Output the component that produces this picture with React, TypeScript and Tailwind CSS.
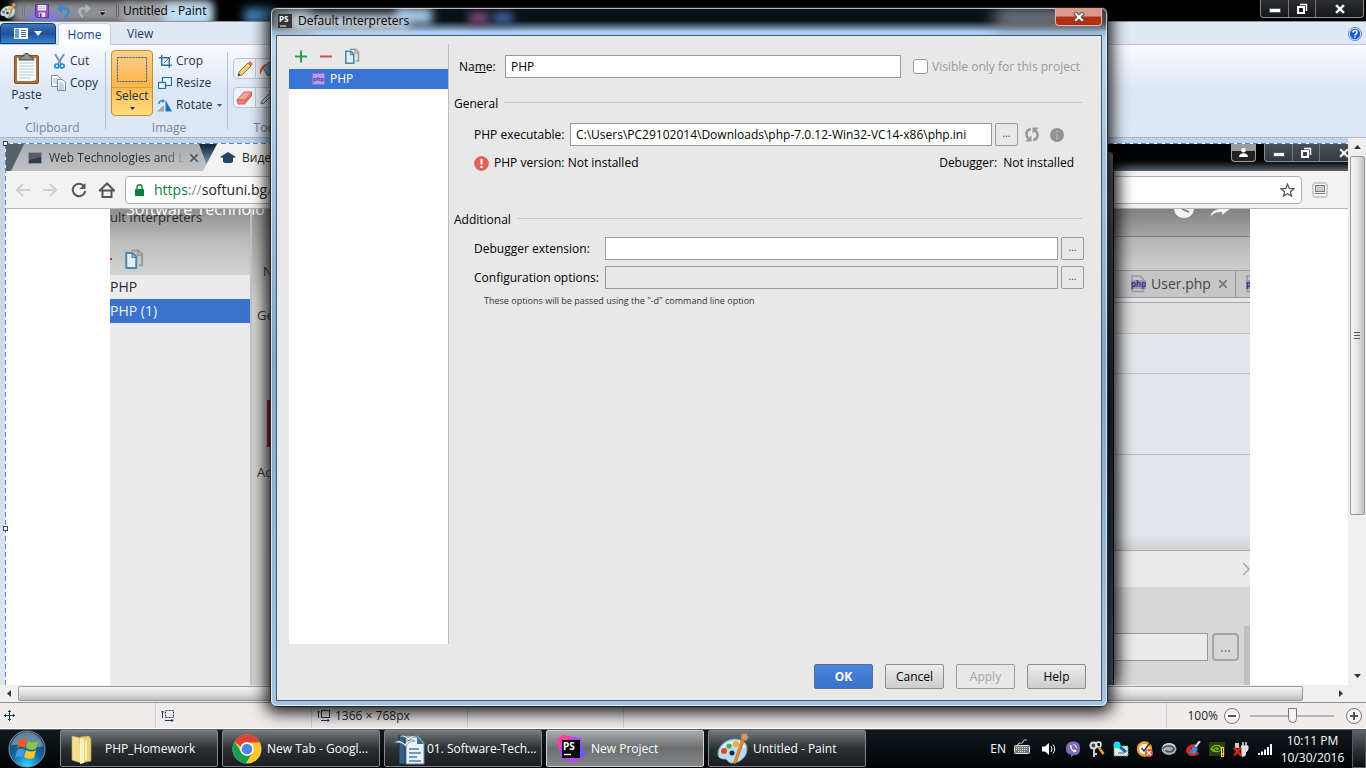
import type { ReactNode } from "react"

/* ---------- small icons ---------- */

function Caret({ className = "" }: { className?: string }) {
  return (
    <svg width="5" height="3" viewBox="0 0 5 3" className={className}>
      <path d="M0 0h5L2.500 3z" fill="currentColor" />
    </svg>
  )
}

function PaletteIcon({ size }: { size: number }) {
  return (
    <svg width={size} height={size} viewBox="0 0 32 32">
      <path d="M1 21C1 12 10 6 18 6c8 0 12 4 12 10 0 8-7 14-15 14-5 0-4-4-7-4-4 0-7-1-7-5z" fill="#b8dcf0" stroke="#6fa3c4" />
      <path d="M4 19c1-6 8-10 14-10 5 0 9 2 9 6" fill="none" stroke="#eaf7ff" strokeWidth="2" />
      <circle cx="7" cy="18" r="3" fill="#e2452f" />
      <circle cx="12" cy="13" r="2.600" fill="#4fae3a" />
      <circle cx="19" cy="11" r="3" fill="#f3ae2b" />
      <circle cx="15" cy="20" r="2.500" fill="#1b2a38" />
      <path d="M28 6l-9 24-2 1 0-2L25 5z" fill="#ef8a25" stroke="#b55f12" strokeWidth=".6" />
      <path d="M24 1l5-1 3 4-3 4-5-2z" fill="#c99a6b" stroke="#8a623c" strokeWidth=".6" />
    </svg>
  )
}

function CopyPagesIcon({ size, blur }: { size: number; blur?: boolean }) {
  return (
    <svg width={size} height={size} viewBox="0 0 16 16" className={blur ? "blur-[.5px]" : ""} fill="none">
      <path d="M6 1.200h5.500l3 3V13H12" stroke="#9a9a9a" strokeWidth="1.600" />
      <path d="M11 1v4h4" stroke="#9a9a9a" strokeWidth="1.200" />
      <path d="M1.800 3.200h5l3 3v9h-8z" fill="#e4edf2" stroke="#4a8ab0" strokeWidth="1.600" />
      <path d="M6.500 3.200v3.400h3.300" stroke="#4a8ab0" strokeWidth="1.200" />
    </svg>
  )
}

function PhpBadge() {
  return (
    <svg width="13" height="12" viewBox="0 0 13 12" className="shrink-0">
      <rect x=".5" y=".5" width="12" height="11" fill="#b79df5" stroke="#8b78cc" />
      <text x="1" y="8" fontSize="6" fontFamily="Open Sans, sans-serif" fontWeight="600" fill="#3c2a6e">php</text>
    </svg>
  )
}

function PhpFile() {
  return (
    <svg width="15" height="18" viewBox="0 0 15 18" className="shrink-0">
      <path d="M1 5V1h8l4 4M1 14v2.500h11.500V14" fill="none" stroke="#999" strokeWidth="1.600" />
      <rect x="0" y="5" width="15" height="9" fill="#9c93cf" />
      <text x="0" y="12" fontSize="8" fontFamily="Open Sans, sans-serif" fontWeight="700" fill="#3d3566">php</text>
    </svg>
  )
}

function WinMin() {
  return (
    <svg width="12" height="5" viewBox="0 0 12 5">
      <rect x=".5" y=".5" width="11" height="4" rx=".5" fill="#fff" stroke="#555a66" />
    </svg>
  )
}

function WinMax() {
  return (
    <svg width="12" height="12" viewBox="0 0 12 12" fill="none">
      <path d="M4 1.500h6.500V8" stroke="#fff" strokeWidth="1.400" />
      <rect x="2" y="4" width="6" height="6" stroke="#fff" strokeWidth="2" />
    </svg>
  )
}

function WinClose() {
  return (
    <svg width="12" height="10" viewBox="0 0 12 10">
      <path d="M3 2l6 6M9 2L3 8" stroke="#3f434d" strokeWidth="4" strokeLinecap="square" />
      <path d="M3 2l6 6M9 2L3 8" stroke="#fff" strokeWidth="2.200" strokeLinecap="square" />
    </svg>
  )
}

/* ---------- Paint window ---------- */

function WindowButtons({ className = "" }: { className?: string }) {
  return (
    <div className={`flex h-[18px] divide-x divide-[#777] overflow-hidden rounded-b border border-t-0 border-[#8a8d92] bg-gradient-to-b from-[#4a4c50]/60 to-[#24272b]/60 ${className}`}>
      <button aria-label="Minimize" className="flex w-7 items-center justify-center pt-1"><WinMin /></button>
      <button aria-label="Restore" className="flex w-[27px] items-center justify-center"><WinMax /></button>
      <button aria-label="Close" className="flex w-[47px] items-center justify-center"><WinClose /></button>
    </div>
  )
}

function PaintTitleBar() {
  return (
    <header className="relative flex h-[22px] shrink-0 items-start overflow-hidden border-b border-[#8c9098] bg-black">
      <div className="absolute top-0 left-3 h-6 w-[200px] bg-[#8e8f93] blur-[4px]" />
      <div className="absolute top-3 left-7 h-3 w-8 bg-[#7a7ae8] blur-[4px]" />
      <div className="absolute top-1 left-[122px] h-5 w-[80px] bg-[#a5a7aa] blur-[4px]" />
      <div className="absolute top-1 left-[164px] h-5 w-12 bg-[#bfe0fa] blur-[4px]" />
      <div className="absolute top-2 left-[244px] h-4 w-8 bg-[#3f7fb5] blur-[5px]" />
      <div className="relative flex h-[21px] flex-1 items-center">
        <PaletteIcon size={16} />
        <span className="ml-1.5 h-3 w-[3px] border-x border-[#777]" />
        <svg width="14" height="14" viewBox="0 0 15 15" className="ml-2.5">
          <path d="M.5.500h14v14H2.500l-2-2z" fill="#8a55b4" stroke="#5d2f88" />
          <rect x="3" y="1" width="9" height="6" fill="#f4effa" />
          <path d="M4 3h7M4 5h7" stroke="#c3b4d4" />
          <rect x="4" y="9" width="7" height="5" fill="#e8e0f0" />
          <rect x="5" y="10" width="2" height="4" fill="#5d2f88" />
        </svg>
        <svg width="13" height="14" viewBox="0 0 13 14" className="ml-2" fill="none">
          <path d="M4 4.500H8c5 0 4.500 5 0 8.500" stroke="#2f8fd0" strokeWidth="2.600" />
          <path d="M5.500 0v9.500L0 4.500z" fill="#2f8fd0" />
        </svg>
        <svg width="13" height="14" viewBox="0 0 13 14" className="ml-2" fill="none">
          <path d="M9 4.500H5C0 4.500.5 9.500 5 13" stroke="#a9b4c2" strokeWidth="2.600" />
          <path d="M7.500 0v9.500L13 4.500z" fill="#a9b4c2" />
        </svg>
        <svg width="7" height="6" viewBox="0 0 7 6" className="mt-1 ml-2"><path d="M0 0h7v1H0zM0 2h7L3.500 6z" fill="#111" stroke="#fff" strokeWidth=".4" /></svg>
        <span className="ml-2.5 h-3 w-[3px] border-x border-[#666]" />
        <span className="ml-1 text-xs leading-4 text-black">Untitled - Paint</span>
      </div>
      <WindowButtons className="relative mr-0.5" />
    </header>
  )
}

function RibbonTabs() {
  return (
    <nav className="flex h-[23px] shrink-0 items-stretch border-b border-[#b8c9de] bg-[#dfe8f4] pt-px text-xs text-[#1e395b]">
      <button aria-label="File menu" className="flex w-14 items-center justify-center gap-1.5 rounded-t-sm border border-[#123a7c] bg-gradient-to-b from-[#3f76bd] via-[#1f4f9c] to-[#3d86cf] text-white">
        <svg width="14" height="11" viewBox="0 0 14 11"><rect width="14" height="11" fill="#fff" /><path d="M1 1h4v9H1z" fill="#6f9cd2" /><path d="M7 2.500h5M7 4.500h5M7 6.500h5M7 8.500h5" stroke="#3a6cb0" /></svg>
        <svg width="8" height="5" viewBox="0 0 8 5"><path d="M0 0h8L4 5z" fill="#fff" /></svg>
      </button>
      <a href="#home" className="-mb-px ml-0.5 flex w-[53px] items-center justify-center rounded-t border border-b-0 border-[#c0d0e4] bg-[#fafcff] text-[#15428b]">Home</a>
      <a href="#view" className="ml-4 flex items-center">View</a>
      <button aria-label="Help" className="mr-1 ml-auto self-center">
        <svg width="14" height="14" viewBox="0 0 14 14">
          <circle cx="7" cy="7" r="6.500" fill="#e8f0ff" stroke="#5b82c4" />
          <circle cx="7" cy="7" r="5.200" fill="#1e5ad8" />
          <path d="M5 5.500c0-3 4.200-2.600 4 0C8.800 7 7 6.800 7 8.500M7 9.500v1.300" stroke="#fff" strokeWidth="1.500" fill="none" />
        </svg>
      </button>
    </nav>
  )
}

function RibbonGroup({ label, className = "", children }: { label: string; className?: string; children: ReactNode }) {
  return (
    <div className={`relative flex shrink-0 flex-col ${className}`}>
      <div className="flex h-[70px] items-start">{children}</div>
      <div className="text-center text-xs leading-4 text-[#74849e]">{label}</div>
    </div>
  )
}

function SmallTool({ icon, label, caret }: { icon: ReactNode; label: string; caret?: boolean }) {
  return (
    <button className="flex h-[22px] items-center text-xs whitespace-nowrap text-[#1e2f4d]">
      <span className="mr-[3px] flex w-4 justify-center">{icon}</span>
      {label}
      {caret && <Caret className="ml-1 text-[#44546e]" />}
    </button>
  )
}

function Ribbon() {
  return (
    <div className="flex h-[93px] shrink-0 overflow-hidden border-b border-[#a9b9d0] bg-gradient-to-b from-[#f8fbff] via-[#dce6f4] to-[#dce8f6] pt-[5px]">
      <RibbonGroup label="Clipboard" className="w-[105px]">
        <button className="flex w-[53px] flex-col items-center pt-[3px] text-xs text-[#1e2f4d]">
          <svg width="25" height="31" viewBox="0 0 25 31">
            <rect x=".5" y="2.500" width="24" height="28" rx="1.500" fill="#a9713b" stroke="#7e4f23" />
            <path d="M3 5h19v22l-3 1H3z" fill="#fbfdfd" />
            <path d="M5 10h15M5 13h15M5 16h15M5 19h15M5 22h15M5 25h12" stroke="#b7c6cc" />
            <path d="M5 7c0-4 5-2 5-5.500L11 .5h3l1 1C15 5 20 3 20 7z" fill="#8c9291" stroke="#404645" />
          </svg>
          <span className="mt-[3px] leading-4">Paste</span>
          <Caret className="mt-1 text-[#44546e]" />
        </button>
        <div className="-ml-0.5 flex flex-col">
          <SmallTool label="Cut" icon={
            <svg width="11" height="15" viewBox="0 0 11 15" fill="none">
              <path d="M1 0l6 10M10 0L4 10" stroke="#8290a3" strokeWidth="2" />
              <circle cx="2.800" cy="12" r="2" stroke="#1c87d2" strokeWidth="1.700" />
              <circle cx="8.200" cy="12" r="2" stroke="#1c87d2" strokeWidth="1.700" />
            </svg>
          } />
          <SmallTool label="Copy" icon={
            <svg width="16" height="16" viewBox="0 0 16 16" fill="#fff" stroke="#7c8796">
              <path d="M.5.500h6l3 3v8h-9z" />
              <path d="M2 4h4M2 6h4M2 8h4" stroke="#9db7d6" />
              <path d="M6.500 4.500h5l3 3v8h-8z" />
              <path d="M8 8h4M8 10h5M8 12h5M8 14h5" stroke="#7fa6d8" />
            </svg>
          } />
        </div>
      </RibbonGroup>
      <div className="mt-0.5 h-[77px] w-px bg-[#b4c3d8]" />
      <RibbonGroup label="Image" className="w-[121px] pl-[5px]">
        <button className="flex h-[66px] w-[42px] flex-col items-center rounded-sm border border-[#c3912a] bg-gradient-to-b from-[#fbd08b] via-[#fdb64a] to-[#ffdc7c] text-xs text-[#1e2f4d]">
          <svg width="30" height="25" viewBox="0 0 30 25" className="mt-1.5">
            <rect x=".5" y=".5" width="29" height="24" fill="none" stroke="#2a6294" strokeDasharray="2 1" />
          </svg>
          <span className="mt-[5px] w-full border-t border-[#dd9c37] leading-4">Select</span>
          <Caret className="mt-[3px]" />
        </button>
        <div className="ml-1 flex flex-col">
          <SmallTool label="Crop" icon={
            <svg width="13" height="13" viewBox="0 0 13 13" fill="none" stroke="#2a6f9f">
              <path d="M2.700 0v10.300h10M0 2.700h10.300v10" strokeWidth="1.400" /><path d="M5 8l7-7" />
            </svg>
          } />
          <SmallTool label="Resize" icon={
            <svg width="14" height="12" viewBox="0 0 14 12" stroke="#2a6f9f" fill="#eef6fc">
              <rect x="4.500" y=".5" width="9" height="8" strokeWidth="1.200" /><rect x=".5" y="5.500" width="7" height="6" strokeWidth="1.200" />
            </svg>
          } />
          <SmallTool label="Rotate" caret icon={
            <svg width="16" height="13" viewBox="0 0 16 13">
              <path d="M0 12.500L7 6v6.500z" fill="#9aa5b1" /><path d="M8.500 1v11.500H15z" fill="#1a75b8" />
              <path d="M2 5c0-3 2-3.500 4-3" stroke="#2d85cc" strokeWidth="1.500" fill="none" /><path d="M5 0l3 2-3 2z" fill="#2d85cc" />
            </svg>
          } />
        </div>
      </RibbonGroup>
      <div className="mt-0.5 h-[77px] w-px bg-[#b4c3d8]" />
      <RibbonGroup label="Tools" className="w-[76px] pl-[5px]">
        <div className="mt-2 flex w-full flex-col gap-2">
          <div className="flex h-[21px] divide-x divide-[#c2cddd] rounded-sm border border-[#b9c6d9] bg-[#eef3fa]">
            <button aria-label="Pencil" className="flex w-[22px] items-center justify-center">
              <svg width="16" height="16" viewBox="0 0 16 16"><path d="M1 15l1-4L11 2l3 3-9 9z" fill="#f2d370" stroke="#8b713a" /><path d="M11 2l2-2 3 3-2 2z" fill="#d9705f" /><path d="M1 15l.8-2.500L3.500 14z" fill="#222" /></svg>
            </button>
            <button aria-label="Fill with color" className="flex w-[22px] items-center justify-center">
              <svg width="16" height="16" viewBox="0 0 16 16"><path d="M4 7l6-6 6 7-7 7z" fill="#83b4da" stroke="#3b6d99" /><path d="M1 14C0 8 3 4 7 3L4 8z" fill="#e85b1d" /></svg>
            </button>
          </div>
          <div className="flex h-[21px] divide-x divide-[#c2cddd] rounded-sm border border-[#b9c6d9] bg-[#eef3fa]">
            <button aria-label="Eraser" className="flex w-[22px] items-center justify-center">
              <svg width="17" height="14" viewBox="0 0 17 14"><path d="M1 9L8 1h8l-7 8z" fill="#f5a597" stroke="#c56b5e" /><path d="M1 9h8v4H2z" fill="#e88475" stroke="#c56b5e" /><path d="M9 9l7-8v4l-7 8z" fill="#d9705f" /></svg>
            </button>
            <button aria-label="Color picker" className="flex w-[22px] items-center justify-center">
              <svg width="15" height="15" viewBox="0 0 15 15"><path d="M1 14l1-3 7-7 2 2-7 7z" fill="#dbe6ef" stroke="#596b7c" /><path d="M9 2l2-2 4 4-2 2z" fill="#34495e" /></svg>
            </button>
          </div>
        </div>
      </RibbonGroup>
    </div>
  )
}

/* ---------- pasted browser shot on the canvas ---------- */

function BrowserTabs() {
  return (
    <div className="relative flex h-[27px] shrink-0 overflow-hidden bg-gradient-to-b from-[#020304] from-60% to-[#5b6470]">
      <div className="absolute inset-y-0 left-0 w-8 bg-[#56616b]" />
      <div className="absolute inset-y-0 left-[180px] w-10 bg-gradient-to-b from-[#10243a] to-[#a5c2dc]" />
      <div className="relative flex w-[203px] items-center bg-gradient-to-b from-[#a9adb1] to-[#bfc2c5] pl-[22px] [clip-path:polygon(18px_0,193px_0,203px_100%,5px_100%)]">
        <svg width="14" height="12" viewBox="0 0 14 12"><rect width="14" height="12" fill="#8d929a" /><rect x="1" y="1" width="12" height="10" fill="#343a45" /><path d="M1 1h12v4L1 8z" fill="#555d6a" /></svg>
        <span className="ml-[7px] w-[137px] bg-gradient-to-r from-[#2b2d30] from-85% to-transparent bg-clip-text text-xs leading-4 whitespace-nowrap text-transparent">Web Technologies and L</span>
        <svg width="8" height="8" viewBox="0 0 8 8" className="ml-1"><path d="M0 0l8 8M8 0L0 8" stroke="#555" strokeWidth="1.600" /></svg>
      </div>
      <div className="relative -ml-1.5 flex w-[200px] items-center bg-[#f2f2f2] pl-[17px] text-xs text-[#222] [clip-path:polygon(14px_0,186px_0,200px_100%,0_100%)]">
        <svg width="16" height="11" viewBox="0 0 16 11"><path d="M8 0l8 5-3 1v4c-3 2-7 2-10 0V6L0 5z" fill="#234465" /></svg>
        <span className="ml-1.5">Видео</span>
      </div>
      <button aria-label="Profile" className="relative mr-2 ml-auto flex h-[18px] w-[25px] items-center justify-center rounded-b border border-t-0 border-[#9a9da1] bg-gradient-to-b from-[#9c9c9c] from-40% to-[#222] to-40%">
        <svg width="9" height="9" viewBox="0 0 9 9" fill="#fff"><circle cx="4.500" cy="2.300" r="2.300" /><path d="M0 9c0-5 9-5 9 0z" /></svg>
      </button>
      <WindowButtons className="relative -mr-5 bg-[#4b5563]" />
    </div>
  )
}

function BrowserToolbar() {
  return (
    <div className="flex h-[38px] shrink-0 items-center border-b border-[#b5b5b5] bg-[#f2f2f2] pl-[9px]">
      <div className="flex items-center gap-3">
        <svg width="16" height="14" viewBox="0 0 16 14" fill="none" stroke="#cfcfcf" strokeWidth="2"><path d="M15 7H2M8 1L2 7l6 6" /></svg>
        <svg width="16" height="14" viewBox="0 0 16 14" fill="none" stroke="#cfcfcf" strokeWidth="2"><path d="M0 7h13M7 1l6 6-6 6" /></svg>
        <svg width="16" height="16" viewBox="0 0 16 16" fill="none" stroke="#555" strokeWidth="2"><path d="M13 4a6.300 6.300 0 1 0 1.300 5" /><path d="M14.500 1v6h-6z" fill="#555" stroke="none" /></svg>
        <svg width="16" height="16" viewBox="0 0 16 16" fill="none" stroke="#555" strokeWidth="2"><path d="M3.500 8v7h9V8M.8 8.500L8 1.500l7.200 7z" /></svg>
      </div>
      <div className="ml-2.5 flex h-7 flex-1 items-center rounded-sm border border-[#b0b0b0] bg-white pr-1.5 pl-[9px]">
        <svg width="9" height="12" viewBox="0 0 9 12"><rect y="5" width="9" height="7" rx=".5" fill="#0b8043" /><path d="M2 5V3c0-3 5-3 5 0v2" fill="none" stroke="#0b8043" strokeWidth="1.400" /></svg>
        <span className="ml-2.5 text-sm text-[#222]"><span className="text-[#0b8043]">https</span><span className="text-[#888]">://</span>softuni.bg<span className="text-[#888]">/t</span></span>
        <svg width="15" height="14" viewBox="0 0 15 14" className="ml-auto"><path d="M7.500 1.200l1.800 4.300 4.600.3-3.500 3 1.100 4.400-4-2.400-4 2.400 1.100-4.400-3.500-3 4.600-.3z" fill="none" stroke="#555" strokeWidth="1.300" /></svg>
      </div>
      <div className="mr-5 ml-2.5 flex size-4 items-center justify-center rounded-sm border-2 border-[#ccc] bg-white">
        <svg width="10" height="9" viewBox="0 0 10 9"><rect x=".5" y=".5" width="9" height="6" fill="#ccc" stroke="#777" /><path d="M0 8.500h10" stroke="#777" /></svg>
      </div>
    </div>
  )
}

function VideoLeft() {
  return (
    <div className="flex w-[140px] shrink-0 flex-col bg-[#ebebeb] text-[13px] text-[#2a2a2a]">
      <div className="flex h-[66px] shrink-0 flex-col justify-between bg-gradient-to-b from-[#8e8e8e] via-[#bdbdbd] to-[#d3d3d3]">
        <span className="leading-4">ult Interpreters</span>
        <span className="mb-1.5 flex items-center"><span className="mr-3 h-0.5 w-0.5 bg-[#c33]" /><CopyPagesIcon size={20} blur /></span>
      </div>
      <div className="flex h-6 items-center text-sm">PHP</div>
      <div className="flex h-6 items-center bg-[#3b72ce] text-sm text-[#e8f0fc]">PHP (1)</div>
    </div>
  )
}

function VideoRight() {
  return (
    <div className="flex w-[142px] shrink-0 flex-col bg-[#e2e5ea] pl-1.5">
      <div className="flex h-[28px] shrink-0 items-start gap-4 border-b border-[#7d7d7d] bg-gradient-to-b from-[#828282] to-[#a6a6a6] pl-[60px]">
        <svg width="20" height="9" viewBox="0 0 20 9"><path d="M0 0h20c-1 12-19 12-20 0z" fill="#f3f3f3" /><path d="M8 0l7 3" stroke="#777" strokeWidth="1.600" /></svg>
        <svg width="20" height="8" viewBox="0 0 20 8"><path d="M0 8C2 2 6 0 11 0h9l-8 6V3C7 3 3 4 0 8z" fill="#f3f3f3" /></svg>
      </div>
      <div className="h-[33px] shrink-0 bg-gradient-to-b from-[#b4b4b4] to-[#cecece]" />
      <div className="flex h-[28px] shrink-0 items-center overflow-hidden border-y border-[#999] bg-[#c6c6c6] pl-[17px] text-sm text-[#444]">
        <PhpFile />
        <span className="ml-[5px]">User.php</span>
        <svg width="8" height="8" viewBox="0 0 8 8" className="mx-2 shrink-0"><path d="M0 0l8 8M8 0L0 8" stroke="#777" strokeWidth="1.800" /></svg>
        <span className="h-full w-px shrink-0 bg-[#999]" />
        <span className="ml-2.5 shrink-0"><PhpFile /></span>
      </div>
      <div className="mt-1 h-[32px] shrink-0 border-y border-[#c0c0c0] border-t-[#aaa] bg-[#dedede]" />
      <div className="h-[40px] shrink-0 border-b border-[#c2c4c8]" />
      <div className="h-[81px] shrink-0 border-b border-[#b9bbbf]" />
      <div className="h-[96px] shrink-0 border-b border-[#aaa] bg-gradient-to-b from-[#e2e5ea] from-85% to-[#cfd1d5]" />
      <div className="flex h-[36px] shrink-0 items-center justify-end bg-[#ebebeb]">
        <svg width="7" height="14" viewBox="0 0 7 14"><path d="M0 1l6 6-6 6" fill="none" stroke="#aaa" strokeWidth="1.500" /></svg>
      </div>
      <div className="flex flex-1 items-start bg-[#d7d7d7]">
        <div className="mt-[46px] h-7 flex-1 border border-l-0 border-[#999] bg-[#ebebeb]" />
        <div className="mt-[46px] mr-[5px] ml-1 flex h-7 w-[27px] items-center justify-center rounded-sm border-2 border-[#a5a5a5] text-sm text-[#777]">...</div>
        <div className="mt-[39px] w-1.5 self-stretch bg-[#c0c0c0]" />
      </div>
    </div>
  )
}

function BrowserShot() {
  return (
    <div className="relative flex min-w-0 flex-1 flex-col overflow-hidden bg-white">
      <BrowserTabs />
      <BrowserToolbar />
      <div className="relative mr-[98px] ml-[104px] flex min-h-0 flex-1 overflow-hidden">
        <VideoLeft />
        <div className="flex flex-1 flex-col border-l-2 border-[#c4c4c4] bg-gradient-to-b from-[#999] to-[#d5d5d5] to-20% pl-[5px] text-[13px] leading-4 text-[#333]">
          <span className="mt-[54px] ml-1.5">Name:</span>
          <span className="mt-7">General</span>
          <span className="mt-[77px] ml-2.5 h-[47px] w-20 bg-[#9c2f25]" />
          <span className="mt-[17px]">Additional</span>
        </div>
        <VideoRight />
        <div className="absolute -top-2.5 left-4 text-base leading-5 text-white">Software Technolo</div>
      </div>
      {/* edge of the dialog inside the pasted picture */}
      <div className="absolute top-2 right-[234px] bottom-0 w-3 rounded-tr border-r border-black bg-gradient-to-b from-[#6a6f77] via-[#23303f] to-[#55718f] shadow-[2px_0_18px_rgba(0,0,0,1)]" />
    </div>
  )
}

function VerticalScroll() {
  return (
    <div className="flex w-[18px] shrink-0 flex-col items-center bg-[#efefef] text-[#333]">
      <svg width="7" height="4" viewBox="0 0 7 4" className="my-[7px] shrink-0"><path d="M0 4h7L3.500 0z" fill="currentColor" /></svg>
      <div className="flex w-[15px] flex-[358] flex-col items-center justify-center gap-0.5 rounded-xs border border-[#979797] bg-gradient-to-r from-[#f6f6f6] via-[#e3e3e3] to-[#c0c0c6]">
        <span className="h-px w-1.5 bg-[#555]" /><span className="h-px w-1.5 bg-[#555]" /><span className="h-px w-1.5 bg-[#555]" />
      </div>
      <div className="flex-[160]" />
      <svg width="7" height="4" viewBox="0 0 7 4" className="mb-[7px] shrink-0"><path d="M0 0h7L3.500 4z" fill="currentColor" /></svg>
    </div>
  )
}

function PaintCanvas() {
  return (
    <main className="flex min-h-0 flex-1">
      <div className="relative flex min-w-0 flex-1 flex-col bg-gradient-to-b from-[#c5d0e2] to-[#dde7f4] pt-[5px] pl-[5px]">
        <div className="h-px shrink-0 bg-[repeating-linear-gradient(90deg,#3c90f0_0_5px,#fff_5px_8px)]" />
        <div className="flex min-h-0 flex-1">
          <div className="w-px bg-[repeating-linear-gradient(180deg,#3c90f0_0_5px,#fff_5px_8px)]" />
          <BrowserShot />
        </div>
        <span className="absolute top-[3px] left-[3px] size-[5px] border border-[#444] bg-white" />
        <span className="absolute top-[388px] left-[3px] size-[5px] border border-[#444] bg-white" />
      </div>
      <VerticalScroll />
    </main>
  )
}

function HorizontalScroll() {
  return (
    <div className="flex h-[17px] shrink-0 items-center bg-[#efefef] pr-[23px] text-[#333]">
      <svg width="4" height="7" viewBox="0 0 4 7" className="mx-[7px]"><path d="M4 0v7L0 3.500z" fill="currentColor" /></svg>
      <div className="h-[15px] flex-1 rounded-xs border border-[#979797] bg-gradient-to-b from-[#f6f6f6] via-[#dedede] to-[#bdbdbf]" />
      <svg width="4" height="7" viewBox="0 0 4 7" className="ml-9"><path d="M0 0v7l4-3.500z" fill="currentColor" /></svg>
    </div>
  )
}

function StatusBar() {
  return (
    <footer className="flex h-[27px] shrink-0 items-stretch border-t border-b border-t-[#8f8f8f] border-b-white bg-[#f0ecec] text-xs text-[#222]">
      <div className="flex w-[156px] items-center border-r border-[#d2d0d0] pl-1">
        <svg width="11" height="11" viewBox="0 0 11 11" stroke="#1e395b" fill="none"><path d="M5.500 0v11M0 5.500h11M4 2l1.500-1.500L7 2M4 9l1.500 1.500L7 9M2 4L.5 5.500 2 7M9 4l1.500 1.500L9 7" /></svg>
      </div>
      <div className="flex w-[156px] items-center border-r border-[#d2d0d0] pl-[5px]">
        <svg width="13" height="12" viewBox="0 0 13 12" stroke="#1e395b" fill="none"><rect x="4.500" y=".5" width="8" height="7" strokeDasharray="2 1" /><path d="M1.500 1v7M0 2.500L1.500 1 3 2.500M4 10.500h8M10.500 9l1.500 1.500-1.500 1.500" /></svg>
      </div>
      <div className="flex w-[156px] items-center border-r border-[#d2d0d0] pl-[5px]">
        <svg width="13" height="12" viewBox="0 0 13 12" stroke="#1e395b" fill="none"><rect x="4.500" y=".5" width="8" height="7" /><path d="M1.500 1v7M0 2.500L1.500 1 3 2.500M4 10.500h8M10.500 9l1.500 1.500-1.500 1.500" /></svg>
        <span className="ml-[5px]">1366 × 768px</span>
      </div>
      <div className="w-[156px] border-r border-[#d2d0d0]" />
      <div className="ml-auto flex items-center border-l border-[#d2d0d0] pr-1 pl-5">
        <label htmlFor="zoom">100%</label>
        <button aria-label="Zoom out" className="ml-1.5"><svg width="16" height="16" viewBox="0 0 16 16"><circle cx="8" cy="8" r="7.500" fill="#f4f4f4" stroke="#777" /><path d="M4 8h8" stroke="#555" strokeWidth="2" /></svg></button>
        <input
          id="zoom" type="range" defaultValue={50}
          className="mr-3 ml-2.5 h-4 w-[84px] appearance-none bg-[linear-gradient(#b5b5b5,#b5b5b5)] bg-[length:100%_2px] bg-center bg-no-repeat [&::-webkit-slider-thumb]:h-[15px] [&::-webkit-slider-thumb]:w-[9px] [&::-webkit-slider-thumb]:appearance-none [&::-webkit-slider-thumb]:rounded-b-md [&::-webkit-slider-thumb]:border [&::-webkit-slider-thumb]:border-[#777] [&::-webkit-slider-thumb]:bg-[#f3f3f3]"
        />
        <button aria-label="Zoom in"><svg width="16" height="16" viewBox="0 0 16 16"><circle cx="8" cy="8" r="7.500" fill="#f4f4f4" stroke="#777" /><path d="M4 8h8M8 4v8" stroke="#555" strokeWidth="2" /></svg></button>
      </div>
    </footer>
  )
}

/* ---------- interpreters dialog ---------- */

function BrowseButton({ label }: { label: string }) {
  return (
    <button aria-label={label} className="flex size-[23px] shrink-0 items-center justify-center rounded-xs border border-[#999] bg-[#e8e8e8] pb-0.5 text-[10px] text-[#444]">...</button>
  )
}

function SectionTitle({ children }: { children: ReactNode }) {
  return (
    <div className="mr-0.5 flex h-4 items-center gap-1.5 leading-4">
      <h2>{children}</h2>
      <span className="mb-1 h-px flex-1 bg-[#c8c8c8]" />
    </div>
  )
}

const inputClass = "h-[23px] min-w-0 flex-1 border border-[#999] px-[5px]"
const buttonClass = "h-[25px] w-[59px] rounded-xs border border-[#8c8c8c] bg-gradient-to-b from-[#ececec] to-[#cdcdcd]"

function InterpreterList() {
  return (
    <aside className="flex w-[160px] shrink-0 flex-col border-r border-[#bdbdbd] pt-[3px]">
      <div className="flex h-[22px] shrink-0 items-start gap-[11px] pt-px pl-[5px]">
        <button aria-label="Add" className="mt-0.5"><svg width="14" height="13" viewBox="0 0 14 13"><path d="M1 6.500h12M7 .500v12" stroke="#2a9e47" strokeWidth="2" /></svg></button>
        <button aria-label="Remove" className="mt-0.5"><svg width="14" height="13" viewBox="0 0 14 13"><path d="M1 6.500h12" stroke="#c9544a" strokeWidth="2" /></svg></button>
        <button aria-label="Copy"><CopyPagesIcon size={16} /></button>
      </div>
      <ul className="flex-1 bg-white">
        <li className="flex h-5 items-center gap-[5px] bg-[#3875d7] pl-[23px] text-white"><PhpBadge />PHP</li>
      </ul>
    </aside>
  )
}

function InterpreterForm() {
  return (
    <section className="flex min-w-0 flex-1 flex-col pr-0.5 pl-[5px]">
      <div className="mt-[11px] flex h-[23px] items-center pl-[5px]">
        <label htmlFor="name" className="w-[46px]">Na<u>m</u>e:</label>
        <input id="name" defaultValue="PHP" className={`${inputClass} bg-white`} />
        <label className="ml-3 flex items-center gap-1 pr-1 text-[#999]">
          <input type="checkbox" disabled className="size-[15px] appearance-none rounded-[3px] border border-[#999] bg-white" />
          Visible only for this project
        </label>
      </div>
      <div className="mt-[18px]"><SectionTitle>General</SectionTitle></div>
      <div className="mt-[11px] flex h-[23px] items-center pl-5">
        <label htmlFor="exe" className="w-24 whitespace-nowrap">PHP executable:</label>
        <input id="exe" defaultValue="C:\Users\PC29102014\Downloads\php-7.0.12-Win32-VC14-x86\php.ini" className={`${inputClass} mr-[3px] bg-white`} />
        <BrowseButton label="Browse executable" />
        <button aria-label="Reload" className="ml-[7px]">
          <svg width="14" height="15" viewBox="0 0 14 15" fill="none" stroke="#999" strokeWidth="2.600">
            <path d="M6 2C1 2.500 0 8 3.500 11.500M8 13c5-.5 6-6 2.500-9.500" />
            <path d="M0 14.500h6.500V8.500zM14 .500H7.500V6.500z" fill="#999" stroke="none" />
          </svg>
        </button>
        <button aria-label="Info" className="mr-5 ml-[11px]">
          <svg width="14" height="14" viewBox="0 0 14 14"><circle cx="7" cy="7" r="7" fill="#939393" /><path d="M7 2.500v2M7 6v5.500" stroke="#adadad" strokeWidth="2" /></svg>
        </button>
      </div>
      <div className="mt-[9px] flex h-4 items-center pr-2.5 pl-5">
        <svg width="15" height="15" viewBox="0 0 15 15"><circle cx="7.500" cy="7.500" r="7" fill="#e0635a" stroke="#c9534b" strokeWidth=".6" /><path d="M7.500 3v5.500M7.500 10v2" stroke="#fff" strokeWidth="2" /></svg>
        <span className="ml-[5px]">PHP version: Not installed</span>
        <span className="ml-auto">Debugger:</span>
        <span className="ml-1.5">Not installed</span>
      </div>
      <div className="mt-[41px]"><SectionTitle>Additional</SectionTitle></div>
      <div className="mt-[9px] flex h-[23px] items-center gap-[3px] pl-5">
        <label htmlFor="ext" className="w-[128px] whitespace-nowrap">Debugger extension:</label>
        <input id="ext" className={`${inputClass} bg-white`} />
        <BrowseButton label="Browse extension" />
      </div>
      <div className="mt-1.5 flex h-[23px] items-center gap-[3px] pl-5">
        <label htmlFor="opts" className="w-[128px] whitespace-nowrap">Configuration options:</label>
        <input id="opts" readOnly className={`${inputClass} bg-[#e8e8e8]`} />
        <BrowseButton label="Edit options" />
      </div>
      <p className="mt-1 pl-[30px] text-[9px] leading-4 text-[#333]">These options will be passed using the "-d" command line option</p>
    </section>
  )
}

function Dialog() {
  return (
    <div role="dialog" aria-labelledby="dialog-title" className="absolute top-[7px] right-[258px] bottom-[61px] left-[270px] flex flex-col overflow-hidden rounded-md border border-[#20262e] bg-gradient-to-b from-[#c2daf2] via-[#84a5c6] to-[#a3c4e4] px-[5px] pb-[5px] shadow-[0_2px_16px_4px_rgba(0,0,0,.9)]">
      <div className="absolute inset-x-0 top-0 h-7 bg-gradient-to-b from-[#0b1118] from-45% to-[#a9ccf2] to-85%" />
      <div className="absolute top-0 left-0 h-6 w-10 bg-[#8d959e] blur-[6px]" />
      <div className="absolute top-1.5 left-5 h-4 w-[118px] bg-[#c6cfd9] blur-[5px]" />
      <div className="absolute top-0 left-[125px] h-4 w-9 bg-[#a9cbea] blur-[5px]" />
      <div className="absolute top-1 left-[198px] h-3 w-5 bg-[#7b4a78] blur-[4px]" />
      <div className="absolute top-1 left-[222px] h-3 w-5 bg-[#3f5f98] blur-[4px]" />
      <div className="absolute top-0 right-0 h-5 w-28 bg-[#777d85] blur-[8px]" />
      <div className="absolute inset-0 rounded-md border border-white/70" />
      <div className="relative flex h-[27px] shrink-0 items-start">
        <svg width="14" height="14" viewBox="0 0 14 14" className="mt-1.5 ml-0.5">
          <rect width="14" height="14" fill="#333" />
          <text x="1" y="8" fontSize="8" fontWeight="700" fontFamily="Open Sans, sans-serif" fill="#fff">PS</text>
          <path d="M2 12h6" stroke="#fff" />
        </svg>
        <h1 id="dialog-title" className="mt-[5px] ml-1.5 leading-4">Default Interpreters</h1>
        <button aria-label="Close dialog" className="ml-auto flex h-[18px] w-[47px] items-center justify-center rounded-b border border-t-0 border-[#eab0a4] bg-gradient-to-b from-[#d99a8d] from-45% to-[#b22f16] to-55%"><WinClose /></button>
      </div>
      <div className="relative flex min-h-0 flex-1 flex-col border border-[#4a5968] bg-[#e8e8e8] pt-2 pr-[15px] pl-3">
        <div className="flex min-h-0 flex-1">
          <InterpreterList />
          <InterpreterForm />
        </div>
        <div className="mt-5 mb-[11px] flex justify-end gap-3 pl-4">
          <button className="h-[25px] w-[59px] rounded-xs border border-[#5a6f94] bg-gradient-to-b from-[#4a84e0] to-[#3b70cb] font-bold text-white">OK</button>
          <button className={buttonClass}>Cancel</button>
          <button disabled className="h-[25px] w-[59px] rounded-xs border border-[#999] text-[#a5a5a5]">Apply</button>
          <button className={buttonClass}>Help</button>
        </div>
      </div>
    </div>
  )
}

/* ---------- taskbar ---------- */

const tasks = [
  {
    title: "PHP_Homework",
    gap: "ml-1",
    icon: (
      <svg width="32" height="32" viewBox="0 0 32 32">
        <path d="M3 3l9 2v25l-9-3z" fill="#f3df91" stroke="#c4a64b" strokeWidth=".7" />
        <path d="M11 4l9-1 2 3v22l-10 2z" fill="#ecd277" stroke="#bb9b3e" strokeWidth=".7" />
        <path d="M11 5l4 1v24l-4 1z" fill="#fbf1be" />
        <path d="M16 8l2-1v20l-2 1z" fill="#fff" opacity=".6" />
      </svg>
    ),
  },
  {
    title: "New Tab - Googl...",
    gap: "ml-1",
    icon: (
      <svg width="30" height="30" viewBox="0 0 32 32">
        <circle cx="16" cy="16" r="15.500" fill="#fbc92f" />
        <path d="M2.600 8.200A15.500 15.500 0 0 1 29.800 9H16a7 7 0 0 0-6.500 4.500z" fill="#dc4437" />
        <path d="M2.600 8.200a15.500 15.500 0 0 0 12 23.200L21.500 20.500a7 7 0 0 1-11.500-1z" fill="#179c58" />
        <circle cx="16" cy="16" r="7.300" fill="#fff" /><circle cx="16" cy="16" r="5.700" fill="#4a86ee" />
      </svg>
    ),
  },
  {
    title: "01. Software-Tech...",
    gap: "ml-0.5",
    icon: (
      <svg width="32" height="32" viewBox="0 0 32 32">
        <rect x="6" y="3" width="6" height="28" fill="#345f86" stroke="#15314c" />
        <path d="M13 3h12l6 7v21H13z" fill="#e9f0f6" stroke="#6b8aa6" /><path d="M24 3v8h7z" fill="#3a6c98" />
        <path d="M16 16h10M16 20h12M16 24h8M16 28h12" stroke="#4e7fa9" strokeWidth="1.600" />
        <path d="M1 10c4-4 8-2 11 1 2-4 6-5 10-3-4 0-8 2-9 6-3-4-7-5-12-4zM6 4c3-3 7-2 9 1 2-2 5-3 9-1-4 0-7 1-8 4-3-4-6-5-10-4z" fill="#fff" stroke="#20435f" strokeWidth=".5" />
      </svg>
    ),
  },
  {
    title: "New Project",
    gap: "ml-1",
    active: true,
    icon: (
      <svg width="30" height="30" viewBox="0 0 30 30">
        <path d="M1 6l6-5 10 2 8 1 0 5 5 12-7 4-5 4-12-4-3-8z" fill="#b04af0" />
        <path d="M1 6l6-5 10 2-10 6-4 7z" fill="#ff3f9a" /><path d="M24 8l6 13-7 4z" fill="#6d5cf6" />
        <rect x="6" y="6" width="18" height="18" fill="#0a0a0a" />
        <text x="7" y="16" fontSize="10" fontWeight="700" fontFamily="Open Sans, sans-serif" fill="#fff">PS</text>
        <path d="M8 20.500h7" stroke="#fff" strokeWidth="1.400" />
      </svg>
    ),
  },
  { title: "Untitled - Paint", gap: "ml-1", icon: <PaletteIcon size={32} /> },
]

function Tray() {
  return (
    <div className="flex items-center gap-2 text-white">
      <span>EN</span>
      <svg width="16" height="16" viewBox="0 0 16 16" className="mr-[3px] mb-1" fill="none" stroke="#ddd"><rect x=".5" y="6.500" width="15" height="8" rx="1" fill="#777" /><path d="M2 8.500h12M2 10.500h12M4 12.500h8" strokeDasharray="1 1" /><path d="M4 6c0-4 4 0 5-3s3-2 4-2" /></svg>
      <svg width="16" height="16" viewBox="0 0 16 16" fill="#fff"><path d="M1 5.500h3L8 2v12l-4-3.500H1z" /><path d="M10 5q2 3 0 6M12 3.500q3.500 4.500 0 9" fill="none" stroke="#fff" /></svg>
      <svg width="16" height="16" viewBox="0 0 16 16"><path d="M8 .500c5 0 7 2 7 7s-2 6.500-6 6.500l-3 2v-2.500C2 13 1 11 1 7.500s2-7 7-7z" fill="#7f6bb8" /><path d="M5 4c-1 1 1 5 4 7 2 1 3-1 2-2l-1.500-.5-1 .7C7 8 6.500 7 6.500 6.500L7 6 6 4z" fill="#fff" /><path d="M8.500 3.500q3 .5 3 3.500" stroke="#fff" fill="none" /></svg>
      <svg width="16" height="16" viewBox="0 0 16 16"><circle cx="4.500" cy="4.500" r="3" fill="#445" stroke="#ddd" strokeWidth="2" /><path d="M4 8h2v8H4zM6 12h2v2H6z" fill="#ccc" /><circle cx="9.500" cy="3.500" r="2.500" fill="none" stroke="#eee" strokeWidth="1.500" /><path d="M9.500 6l5 7" stroke="#e8a02a" strokeWidth="2.600" /></svg>
      <svg width="16" height="16" viewBox="0 0 16 16"><rect x="1" y="5" width="14" height="10" fill="#dfeee4" stroke="#4a9d5d" strokeDasharray="2 1" /><path d="M7 6l6 5" stroke="#245fb0" strokeWidth="3" /><path d="M5 12h6" stroke="#555" /><circle cx="4" cy="4" r="3.500" fill="#12e0f0" /></svg>
      <svg width="16" height="16" viewBox="0 0 16 16"><circle cx="7.500" cy="8" r="6.500" fill="#fff" stroke="#f2a31b" strokeWidth="2.500" /><path d="M4.500 7l2.500 3 6-8" stroke="#333" strokeWidth="1.600" fill="none" /><circle cx="12" cy="12" r="4" fill="#e0512c" /><path d="M10 10l4 4M14 10l-4 4" stroke="#fff" strokeWidth="1.300" /></svg>
      <svg width="16" height="16" viewBox="0 0 16 16"><ellipse cx="8" cy="8" rx="7.500" ry="6" fill="#a7adb2" /><path d="M2 8c1-4 10-4 11 0-1 4-8 3-8 1" fill="none" stroke="#4d565e" strokeWidth="1.700" /><path d="M2 5c3-3 9-3 12 0" stroke="#eef2f4" fill="none" /></svg>
      <svg width="16" height="16" viewBox="0 0 16 16"><path d="M13 5C9 1 1 4 1 9.500S9 17 14 13l-2-3c-2 2-6 2-6-1s3-4 5-1z" fill="#cf2c1d" /><path d="M15 0L10 6" stroke="#d8dfe6" strokeWidth="2" /><path d="M9 4l4 4-3 5-6-1z" fill="#3b8bd4" /></svg>
      <svg width="16" height="16" viewBox="0 0 16 16"><rect width="16" height="14" y="1" fill="#2c3a1c" /><path d="M1 8c3-5 9-6 13-1-3 5-9 6-13 1z" fill="#76b900" /><path d="M4 8c1-3 6-3 7 0-1 2-4 2-5 0" fill="none" stroke="#1d2a10" strokeWidth="1.200" /><path d="M12 6h3v10h-3z" fill="#f5d92b" /><path d="M13.500 7v5M13.500 13.500V15" stroke="#333" /></svg>
      <svg width="16" height="16" viewBox="0 0 16 16"><path d="M8 5h7v3q-1 3-2.500 3v2q0 3-4 2" fill="#ddd" stroke="#eee" /><path d="M10 1v4M13 1v4" stroke="#fff" strokeWidth="1.300" /><path d="M2 2h4v5H2z" fill="#ccc" /><path d="M1 6.500l7 8M8 6.500l-7 8" stroke="#e2231b" strokeWidth="2.500" /></svg>
      <svg width="16" height="16" viewBox="0 0 16 16" fill="#fff"><path d="M1 12h2v2H1zM4 10.500h2V14H4zM7 8.500h2V14H7zM10 6h2v8h-2zM13 3h2v11h-2z" /></svg>
    </div>
  )
}

function Taskbar() {
  return (
    <div className="flex h-[39px] shrink-0 items-stretch border-t border-[#59636c] bg-gradient-to-b from-[#12181d] to-[#020507] text-xs">
      <button aria-label="Start" className="mr-[6px] flex w-[54px] items-center justify-center">
        <svg width="38" height="38" viewBox="0 0 38 38">
          <defs>
            <radialGradient id="orb" cx=".5" cy=".95" r=".9"><stop offset="0" stopColor="#35d6ff" /><stop offset=".45" stopColor="#136aa8" /><stop offset="1" stopColor="#173a5c" /></radialGradient>
          </defs>
          <circle cx="19" cy="19" r="18" fill="url(#orb)" stroke="#7e97aa" />
          <path d="M3 16C5 6 13 2 19 2s14 4 16 14C25 20 12 12 3 16z" fill="#fff" opacity=".35" />
          <path d="M11 10q4-3 8 0l-2 8q-4-3-8 0z" fill="#ee5a26" />
          <path d="M20 11q5 3 10 0l-2 8q-5 2-10-1z" fill="#8cc63f" />
          <path d="M9 20q4-3 8 0l-2 8q-4-3-8 0z" fill="#3f9ade" />
          <path d="M18 20q5 3 10 0l-2 8q-5 2-10-1z" fill="#fdc827" />
        </svg>
      </button>
      <div className="flex gap-1 pb-px">
        {tasks.map((t) => (
          <button
            key={t.title}
            className={
              t.active
                ? "flex w-[158px] items-center rounded-xs border border-[#d0d0d0] bg-gradient-to-b from-[#a9abac] via-[#6c6e70] to-[#858789] pl-2 text-white"
                : "flex w-[158px] items-center rounded-xs border border-[#83878a] bg-gradient-to-b from-[#74787a] via-[#2b3033] to-[#1a1e20] pl-2 text-white"
            }
          >
            <span className="flex w-8 shrink-0 justify-center">{t.icon}</span>
            <span className={`${t.gap} whitespace-nowrap`}>{t.title}</span>
          </button>
        ))}
      </div>
      <div className="ml-auto flex items-stretch">
        <Tray />
        <div className="flex w-[79px] flex-col items-center justify-center leading-[17px] text-white">
          <span>10:11 PM</span>
          <span>10/30/2016</span>
        </div>
        <button aria-label="Show desktop" className="w-3.5 border border-[#555b60] bg-gradient-to-b from-[#5b6064] to-[#0c0f11]" />
      </div>
    </div>
  )
}

export default function App() {
  return (
    <div className="relative flex h-screen flex-col overflow-hidden bg-black font-['Open_Sans','Noto_Sans',sans-serif]">
      <PaintTitleBar />
      <RibbonTabs />
      <Ribbon />
      <PaintCanvas />
      <HorizontalScroll />
      <StatusBar />
      <Taskbar />
      <div className="text-xs text-black"><Dialog /></div>
    </div>
  )
}
